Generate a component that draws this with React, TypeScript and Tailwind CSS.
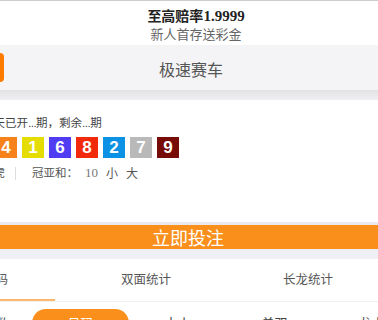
import React from "react";

const balls = [
  { n: "4", c: "bg-[#f7821b]" },
  { n: "1", c: "bg-[#e5dd00]" },
  { n: "6", c: "bg-[#4f3cf3]" },
  { n: "8", c: "bg-[#f3290c]" },
  { n: "2", c: "bg-[#0c92e4]" },
  { n: "7", c: "bg-[#b9b9b9]" },
  { n: "9", c: "bg-[#760b08]" },
];

export default function App() {
  return (
    <div
      className="w-[378px] h-[320px] overflow-hidden bg-white"
      style={{ fontFamily: '"Noto Sans CJK SC", "Noto Sans", sans-serif' }}
    >
      <div className="h-px bg-[#cdcdcd]" />
      <div className="h-[44px] flex flex-col items-center pl-[14px] pt-[5px]">
        <div className="text-[14px] leading-[18px] font-bold text-[#222]">
          至高赔率
          <span className="text-[15px]" style={{ fontFamily: '"Liberation Serif", serif' }}>
            1.9999
          </span>
        </div>
        <div className="text-[13px] leading-[17px] text-[#666]">新人首存送彩金</div>
      </div>
      <div className="h-[45px] bg-[#f4f4f6] flex items-center">
        <div className="w-[4px] h-[29px] bg-[#ff7b00] rounded-r-[4px]" />
        <div className="flex-1 text-center text-[16px] text-[#555] pt-[3px]">极速赛车</div>
      </div>
      <div className="h-[10px] bg-gradient-to-b from-[#e2e2e4] to-[#f0f0f3]" />
      <div className="h-[122px] bg-white flex flex-col">
        <div className="mt-[12px] ml-[-18px] text-[11.5px] leading-[20px] text-[#444] whitespace-nowrap">
          今天已开<span style={{ fontFamily: '"Liberation Sans", sans-serif' }} className="tracking-[-0.5px]">...</span>期，剩余
          <span style={{ fontFamily: '"Liberation Sans", sans-serif' }} className="tracking-[-0.5px]">...</span>期
        </div>
        <div className="mt-[4px] ml-[-5px] flex gap-[5px]">
          {balls.map((b, i) => (
            <div
              key={i}
              className={`w-[22px] h-[21px] ${b.c} flex items-center justify-center text-white font-bold text-[17px]`}
              style={{ fontFamily: '"Liberation Sans", Arial, sans-serif' }}
            >
              {b.n}
            </div>
          ))}
        </div>
        <div className="mt-[5px] ml-[-18px] flex items-center h-[20px] text-[11.5px] text-[#555] whitespace-nowrap">
          <span>龙虎</span>
          <span className="ml-[10px] w-px h-[13px] bg-[#dddddd]" />
          <span className="ml-[16px]">冠亚和：</span>
          <span className="ml-[7px] text-[#777] text-[13px]" style={{ fontFamily: '"Liberation Serif", serif' }}>
            10
          </span>
          <span className="ml-[8px] text-[12px]">小</span>
          <span className="ml-[8px] text-[12px]">大</span>
        </div>
      </div>
      <div className="h-[3px] bg-[#e9e9ee]" />
      <div className="h-[24px] bg-[#fa8f1c] flex items-center justify-center text-white text-[18px] pr-[2px]">
        立即投注
      </div>
      <div className="h-[10px] bg-[#eef0f5]" />
      <div className="h-[40px] flex ml-[-97px] text-[12.5px] text-[#555]">
        <div className="w-[162px] shrink-0 flex items-center justify-end pr-[57px]">号码</div>
        <div className="w-[162px] shrink-0 flex items-center justify-center">双面统计</div>
        <div className="w-[162px] shrink-0 flex items-center justify-center">长龙统计</div>
      </div>
      <div className="h-[2px] w-[55px] bg-[#fdb86c]" />
      <div className="h-px bg-[#f0f0f0]" />
      <div className="flex ml-[-65px] mt-[7px] text-[13px] text-[#444]">
        <div className="w-[97px] shrink-0 h-[28px] flex items-center justify-end pr-[23px]">总数</div>
        <div className="w-[97px] shrink-0 h-[28px] flex items-center justify-center bg-[#fa8f1c] rounded-full text-white">
          号码
        </div>
        <div className="w-[97px] shrink-0 h-[28px] flex items-center justify-center">大小</div>
        <div className="w-[97px] shrink-0 h-[28px] flex items-center justify-center">单双</div>
        <div className="w-[97px] shrink-0 h-[28px] flex items-center justify-center">龙虎</div>
      </div>
    </div>
  );
}
